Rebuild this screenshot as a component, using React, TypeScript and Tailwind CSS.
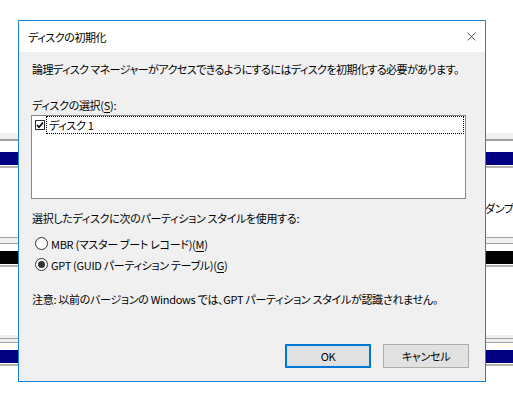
import { X } from "lucide-react";

const Mnemonic = ({ k }: { k: string }) => <span className="underline underline-offset-2">{k}</span>;

const BackgroundStripes = () => {
  return (
    <div className="flex flex-col w-[513px] h-[402px] bg-white overflow-hidden">
      <div className="h-[133px] shrink-0" />
      <div className="h-[6px] shrink-0 bg-[#f0f0f0]" />
      <div className="h-[2px] shrink-0 bg-[#a0a0a0]" />
      <div className="h-[11px] shrink-0" />
      <div className="h-[13px] shrink-0 bg-[#000080]" />
      <div className="h-[1px] shrink-0" />
      <div className="h-[2px] shrink-0 bg-[#b4b4b4]" />
      <div className="h-[69px] shrink-0 pl-[485px] pt-[32px] whitespace-nowrap text-black">
        ダンプ
      </div>
      <div className="h-[1px] shrink-0 bg-[#a0a0a0]" />
      <div className="h-[5px] shrink-0 bg-[#f0f0f0]" />
      <div className="h-[1px] shrink-0 bg-[#a0a0a0]" />
      <div className="h-[7px] shrink-0" />
      <div className="h-[13px] shrink-0 bg-black" />
      <div className="h-[1px] shrink-0" />
      <div className="h-[2px] shrink-0 bg-[#b4b4b4]" />
      <div className="h-[68px] shrink-0" />
      <div className="h-[3px] shrink-0 bg-[#f0f0f0]" />
      <div className="h-[1px] shrink-0 bg-[#a0a0a0]" />
      <div className="h-[3px] shrink-0 bg-[#f0f0f0]" />
      <div className="h-[1px] shrink-0 bg-[#a0a0a0]" />
      <div className="h-[7px] shrink-0" />
      <div className="h-[13px] shrink-0 bg-[#000080]" />
      <div className="h-[1px] shrink-0" />
      <div className="h-[2px] shrink-0 bg-[#b4b4b4]" />
    </div>
  );
};

const InitDiskDialog = () => {
  return (
    <div className="absolute left-[18px] top-[20px] w-[468px] h-[362px] border border-[#1883d7] bg-[#f0f0f0] flex flex-col">
      {/* title bar */}
      <div className="h-[31px] bg-white flex items-center justify-between pl-[9px] pr-[9px]">
        <span className="tracking-[-0.4px]">ディスクの初期化</span>
        <X size={15} strokeWidth={1} className="text-black -mr-[3px]" />
      </div>

      <div className="flex-1 flex flex-col pl-[12px]">
        <p className="mt-[9px] pl-[1px] whitespace-nowrap tracking-[-0.55px]">
          論理ディスク マネージャーがアクセスできるようにするにはディスクを初期化する必要があります。
        </p>

        <p className="mt-[20px] pl-[1px]">
          ディスクの選択(<Mnemonic k="S" />):
        </p>

        <div className="mt-[2px] w-[435px] h-[84px] bg-white border border-[#828790]">
          <div className="flex items-center pl-[3px] pr-[1px]">
            <span className="w-[10px] h-[10px] border border-[#333] flex items-center justify-center shrink-0">
              <svg width="8" height="8" viewBox="0 0 8 8">
                <path d="M1 4 L3 6.2 L7 1.5" fill="none" stroke="#000" strokeWidth="1.6" />
              </svg>
            </span>
            <div className="ml-[1px] flex-1 h-[18px] border border-dotted border-black flex items-center pl-[2px]">
              ディスク 1
            </div>
          </div>
        </div>

        <p className="mt-[11px] pl-[1px]">選択したディスクに次のパーティション スタイルを使用する:</p>

        <div className="mt-[7px] flex flex-col pl-[4px]">
          <label className="h-[21px] flex items-center">
            <span className="w-[13px] h-[13px] rounded-full border border-[#333] bg-white shrink-0" />
            <span className="ml-[3px]">
              MBR (マスター ブート レコード)(<Mnemonic k="M" />)
            </span>
          </label>
          <label className="h-[21px] flex items-center">
            <span className="w-[13px] h-[13px] rounded-full border border-[#333] bg-white shrink-0 flex items-center justify-center">
              <span className="w-[7px] h-[7px] rounded-full bg-[#333]" />
            </span>
            <span className="ml-[3px]">
              GPT (GUID パーティション テーブル)(<Mnemonic k="G" />)
            </span>
          </label>
        </div>

        <p className="mt-[16px] pl-[1px] whitespace-nowrap">
          注意: 以前のバージョンの Windows では、GPT パーティション スタイルが認識されません。
        </p>

        <div className="mt-auto mb-[13px] pr-[16px] flex justify-end gap-[12px]">
          <button className="w-[86px] h-[24px] bg-[#e1e1e1] border-2 border-[#0078d7] flex items-center justify-center">
            OK
          </button>
          <button className="w-[86px] h-[24px] bg-[#e1e1e1] border border-[#adadad] flex items-center justify-center">
            キャンセル
          </button>
        </div>
      </div>
    </div>
  );
};

export default function App() {
  return (
    <div className="relative w-[513px] h-[402px] overflow-hidden font-['Noto_Sans_CJK_JP','Noto_Sans',sans-serif] text-[11px] leading-[16px] tracking-[-0.3px] text-black [font-feature-settings:'palt']">
      <BackgroundStripes />
      <InitDiskDialog />
    </div>
  );
}
